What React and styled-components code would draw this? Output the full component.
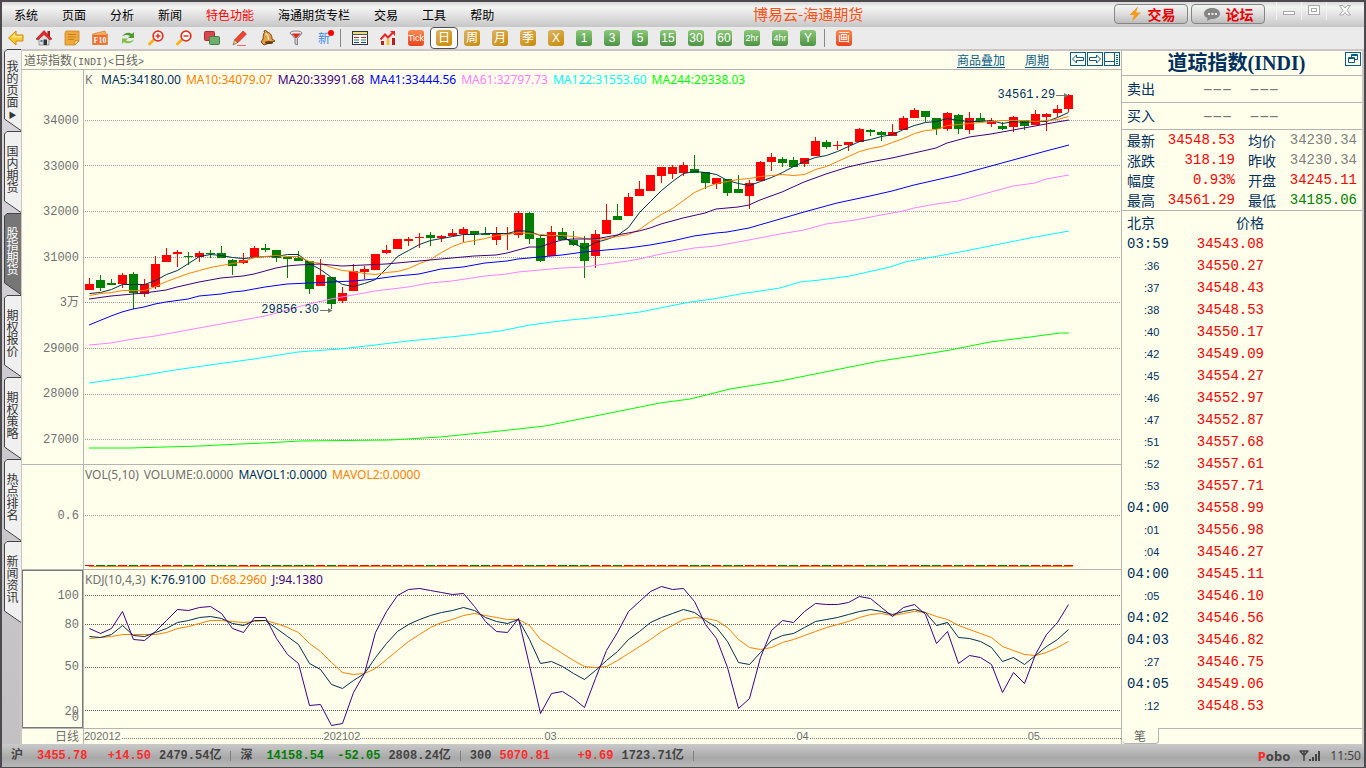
import { Fragment } from 'react';
import styled, { createGlobalStyle } from 'styled-components';

const MENUS = ['系统', '页面', '分析', '新闻', '特色功能', '海通期货专栏', '交易', '工具', '帮助'];

const PERIODS = [
  { label: 'Tick', tone: 'orange', tiny: true },
  { label: '日', tone: 'gold', active: true },
  { label: '周', tone: 'gold' },
  { label: '月', tone: 'gold' },
  { label: '季', tone: 'gold' },
  { label: 'X', tone: 'gold' },
  { label: '1', tone: 'green' },
  { label: '3', tone: 'green' },
  { label: '5', tone: 'green' },
  { label: '15', tone: 'green' },
  { label: '30', tone: 'green' },
  { label: '60', tone: 'green' },
  { label: '2hr', tone: 'green', tiny: true },
  { label: '4hr', tone: 'green', tiny: true },
  { label: 'Y', tone: 'green' },
];

const TABS = ['我的页面', '国内期货', '股指期货', '期权报价', '期权策略', '热点排名', '新闻资讯'];

const STATS = [
  ['最新', '34548.53', 'up', '均价', '34230.34', 'flat'],
  ['涨跌', '318.19', 'up', '昨收', '34230.34', 'flat'],
  ['幅度', '0.93%', 'up', '开盘', '34245.11', 'up'],
  ['最高', '34561.29', 'up', '最低', '34185.06', 'down'],
];

const TICKS = [
  ['03:59', '34543.08'],
  [':36', '34550.27'],
  [':37', '34548.43'],
  [':38', '34548.53'],
  [':40', '34550.17'],
  [':42', '34549.09'],
  [':45', '34554.27'],
  [':46', '34552.97'],
  [':47', '34552.87'],
  [':51', '34557.68'],
  [':52', '34557.61'],
  [':53', '34557.71'],
  ['04:00', '34558.99'],
  [':01', '34556.98'],
  [':04', '34546.27'],
  ['04:00', '34545.11'],
  [':05', '34546.10'],
  ['04:02', '34546.56'],
  ['04:03', '34546.82'],
  [':27', '34546.75'],
  ['04:05', '34549.06'],
  [':12', '34548.53'],
];

const QUOTES = [
  { name: '沪', last: '3455.78', change: '+14.50', amount: '2479.54亿', trend: 'up' },
  { name: '深', last: '14158.54', change: '-52.05', amount: '2808.24亿', trend: 'down' },
  { name: '300', last: '5070.81', change: '+9.69', amount: '1723.71亿', trend: 'up' },
];

const PRICE_LABELS = ['34000', '33000', '32000', '31000', '3万', '29000', '28000', '27000'];
const PRICE_LINES = [120, 165, 211, 257, 302, 348, 394, 439];
const KDJ_LINES = [595, 624, 667, 710];

const MA_LEGEND = [
  ['MA5:34180.00', '#003060'],
  ['MA10:34079.07', '#ff8000'],
  ['MA20:33991.68', '#400080'],
  ['MA41:33444.56', '#0000ff'],
  ['MA61:32797.73', '#ff80ff'],
  ['MA122:31553.60', '#00ffff'],
  ['MA244:29338.03', '#00ff00'],
];

// one candle per day: [up?, high, body top, body bottom, low]
const CANDLES = [
  [1, 278, 284, 290, 290], [0, 275, 280, 288, 291], [0, 279, 283, 285, 285], [1, 273, 275, 284, 288],
  [0, 272, 274, 293, 309], [1, 279, 284, 294, 297], [1, 256, 264, 287, 289], [1, 248, 255, 262, 262],
  [1, 250, 252, 254, 267], [0, 252, 256, 257, 265], [1, 251, 253, 257, 262], [0, 250, 253, 254, 258],
  [0, 246, 253, 258, 258], [0, 259, 260, 266, 275], [1, 253, 260, 263, 264], [1, 246, 248, 257, 257],
  [0, 244, 248, 250, 252], [0, 250, 250, 258, 262], [0, 257, 257, 259, 278], [0, 251, 258, 261, 261],
  [0, 261, 261, 289, 294], [1, 259, 275, 286, 286], [0, 277, 277, 304, 309], [1, 287, 293, 301, 303],
  [1, 264, 271, 291, 291], [1, 266, 269, 272, 279], [1, 254, 254, 270, 270], [1, 245, 250, 253, 254],
  [1, 239, 239, 249, 249], [1, 237, 239, 241, 246], [1, 233, 237, 238, 248], [0, 232, 235, 238, 246],
  [1, 235, 236, 238, 242], [1, 229, 233, 236, 236], [1, 227, 229, 234, 242], [0, 231, 231, 234, 245],
  [0, 227, 234, 235, 235], [1, 227, 233, 240, 245], [1, 227, 233, 234, 250], [1, 211, 213, 235, 238],
  [0, 212, 213, 239, 244], [0, 236, 238, 261, 262], [1, 226, 232, 256, 256], [0, 228, 232, 240, 240],
  [0, 231, 240, 245, 246], [0, 236, 243, 261, 278], [1, 230, 234, 256, 268], [1, 204, 220, 234, 234],
  [0, 204, 216, 220, 220], [1, 193, 197, 216, 216], [1, 181, 189, 196, 196], [1, 175, 175, 191, 191],
  [1, 167, 167, 176, 183], [1, 165, 167, 174, 179], [1, 162, 165, 173, 176], [0, 155, 169, 173, 173],
  [0, 172, 172, 183, 189], [1, 178, 178, 184, 189], [0, 179, 179, 193, 196], [0, 175, 189, 193, 193],
  [1, 180, 183, 196, 209], [1, 161, 162, 181, 181], [1, 153, 157, 162, 171], [0, 157, 159, 163, 167],
  [0, 157, 160, 167, 167], [1, 158, 158, 164, 167], [1, 137, 141, 156, 156], [0, 140, 142, 147, 149],
  [1, 141, 145, 146, 150], [1, 142, 142, 145, 151], [1, 128, 129, 142, 142], [0, 129, 130, 132, 136],
  [0, 131, 132, 135, 141], [1, 124, 132, 136, 136], [1, 116, 118, 130, 130], [1, 108, 110, 118, 118],
  [0, 111, 111, 117, 122], [0, 118, 118, 129, 135], [1, 112, 113, 129, 131], [0, 114, 115, 129, 134],
  [1, 112, 118, 130, 134], [0, 113, 118, 121, 121], [1, 118, 121, 124, 127], [0, 122, 126, 129, 130],
  [1, 116, 117, 127, 132], [0, 120, 120, 126, 130], [1, 110, 114, 125, 125], [1, 113, 114, 117, 131],
  [1, 105, 109, 113, 117], [1, 94, 95, 109, 112],
];

// daily series, one y value per candle
const MA5 = [
  293, 292, 289, 284, 284, 284, 280, 274, 270, 263, 256, 254, 255, 257, 258, 257, 256, 256, 254, 254,
  263, 269, 277, 284, 286, 283, 279, 268, 256, 250, 244, 240, 238, 236, 234, 234, 233, 233, 233, 230,
  231, 235, 235, 236, 243, 248, 242, 239, 235, 227, 212, 201, 190, 181, 173, 171, 172, 174, 180, 183,
  185, 181, 177, 172, 166, 161, 157, 155, 151, 146, 141, 139, 136, 134, 129, 125, 122, 121, 118, 120,
  121, 121, 120, 123, 121, 122, 121, 121, 117, 112,
];
const MA10 = [
  295, 293, 292, 290, 290, 290, 286, 281, 277, 273, 270, 267, 265, 263, 261, 257, 256, 255, 256, 256,
  261, 263, 267, 270, 271, 273, 274, 272, 271, 268, 263, 259, 252, 246, 242, 240, 238, 235, 234, 232,
  233, 234, 235, 235, 236, 238, 239, 238, 236, 234, 229, 221, 214, 208, 200, 192, 187, 183, 181, 179,
  178, 176, 175, 174, 175, 174, 169, 166, 161, 156, 151, 148, 146, 142, 138, 133, 130, 129, 125, 124,
  123, 122, 121, 120, 120, 120, 121, 120, 119, 116,
];
const KLINE = [
  636, 637, 634, 625, 635, 636, 632, 628, 622, 620, 617, 616, 618, 623, 625, 620, 620, 628, 636, 644,
  663, 669, 684, 688, 680, 673, 657, 643, 631, 624, 619, 615, 612, 610, 607, 610, 617, 621, 623, 619,
  639, 663, 661, 666, 673, 679, 670, 660, 651, 639, 631, 622, 617, 613, 609, 612, 620, 627, 641, 662,
  664, 652, 640, 635, 633, 627, 621, 619, 617, 614, 611, 609, 611, 614, 611, 609, 612, 625, 622, 637,
  638, 641, 647, 661, 657, 664, 655, 646, 639, 629,
];
const DLINE = [
  638, 637, 636, 634, 634, 634, 634, 632, 628, 626, 623, 620, 620, 621, 622, 621, 620, 623, 627, 632,
  643, 651, 662, 672, 674, 673, 668, 659, 650, 641, 634, 627, 622, 619, 615, 613, 615, 617, 619, 619,
  625, 639, 646, 653, 660, 666, 667, 666, 660, 653, 646, 639, 631, 625, 619, 617, 618, 620, 627, 639,
  647, 649, 647, 642, 639, 635, 631, 627, 624, 621, 617, 614, 613, 615, 613, 611, 612, 616, 619, 625,
  629, 633, 637, 646, 650, 654, 655, 652, 647, 641,
];
const JLINE = [
  628, 633, 628, 611, 639, 640, 631, 620, 609, 610, 607, 606, 613, 628, 632, 617, 617, 638, 654, 663,
  705, 704, 725, 723, 692, 673, 632, 611, 595, 589, 588, 590, 592, 594, 593, 606, 621, 631, 632, 618,
  665, 713, 693, 691, 698, 707, 678, 650, 632, 611, 601, 591, 586, 589, 588, 601, 624, 638, 667, 708,
  698, 657, 630, 620, 622, 611, 603, 604, 604, 602, 596, 598, 607, 616, 607, 604, 614, 643, 631, 663,
  655, 657, 664, 692, 672, 683, 654, 634, 622, 604,
];

// slower averages, drawn through fewer points
const MA20 =
  '89,299 111,296 133,294 144,293 166,290 177,287 199,282 221,278 243,276 254,274 265,271 276,268 287,266 298,265 320,264 342,266 364,265 386,264 408,262 430,260 452,258 474,256 496,255 507,253 518,250 529,247 540,247 551,243 562,240 573,239 595,239 606,237 617,235 628,233 639,231 650,228 661,224 683,218 705,213 716,209 727,208 738,207 749,205 760,200 782,192 793,187 804,182 826,174 848,167 870,162 892,158 914,153 936,148 947,143 969,137 991,134 1013,130 1035,126 1057,122 1069,120';
const MA41 =
  '89,325 111,316 122,312 133,309 144,307 155,304 166,302 188,299 199,296 221,294 232,292 243,291 265,287 287,284 309,283 331,282 353,281 375,279 397,276 408,275 419,274 441,269 463,267 485,263 507,261 518,259 540,257 562,255 584,252 606,250 628,248 650,245 672,241 694,236 716,233 727,232 749,228 780,219 804,212 837,203 870,196 892,191 914,185 936,180 958,175 980,169 1002,163 1024,157 1046,151 1069,145';
const MA61 =
  '89,345 111,343 133,339 155,336 177,332 199,328 221,324 243,320 265,316 287,310 309,304 331,299 353,295 375,291 408,287 430,283 452,281 485,276 507,274 518,272 540,270 562,268 584,267 606,264 628,261 639,259 661,254 694,248 716,246 749,240 780,234 804,230 826,224 855,220 881,215 903,211 914,208 936,204 958,201 980,195 1002,189 1013,186 1035,183 1046,179 1069,175';
const MA122 =
  '89,383 110,380 133,377 175,370 217,364 254,359 298,352 340,349 375,345 408,341 460,336 500,331 530,325 560,321 600,317 640,312 665,307 690,302 713,299 740,294 780,288 800,282 820,280 850,276 890,267 905,262 960,252 1000,244 1030,238 1069,231';
const MA244 =
  '89,448 130,448 165,447 200,446 240,444 265,443 300,441 390,440 440,437 500,431 545,426 590,417 625,410 660,403 690,399 730,389 780,381 830,371 880,361 920,355 950,350 990,342 1030,337 1060,333 1069,333';

const toPoints = (series) => series.map((y, i) => `${89.5 + i * 11},${y + 0.5}`).join(' ');

/* ---------- icons ---------- */

const BackIcon = () => (
  <Icon viewBox="0 0 16 16">
    <path d="M8 1v4h7v6H8v4L0.500 8z" fill="#fbc82c" stroke="#d08a10" />
    <path d="M7 3.500L3 7.500h11V6H7z" fill="#fdea90" />
  </Icon>
);

const HomeIcon = () => (
  <Icon viewBox="0 0 16 16">
    <path d="M3 8l5-5 5 5v7H3z" fill="#dedede" stroke="#888" strokeWidth="0.800" />
    <path d="M11.500 1h2.500v6h-2.500z" fill="#a8201c" />
    <path d="M0 9L8 0.500 16 9l-2 1L8 4.500 2 10z" fill="#e02a2a" stroke="#a01818" strokeWidth="0.600" />
    <path d="M7.500 9.500h3.500V15H7.500z" fill="#333" />
    <path d="M4.500 10h2v2h-2z" fill="#4878a8" />
  </Icon>
);

const NoteIcon = () => (
  <Icon viewBox="0 0 16 16">
    <path d="M2 1h13v10l-4 4H1V3z" fill="#eda93a" stroke="#c88424" strokeWidth="0.800" />
    <path d="M15 11l-4 4v-4z" fill="#ffe2a0" stroke="#b87414" strokeWidth="0.600" />
    <path d="M4 4.500h8M4 7h8M4 9.500h6" stroke="#c88020" />
  </Icon>
);

const F10Icon = () => (
  <Icon viewBox="0 0 16 16">
    <path d="M0.500 4L13 1l1 3h1.500v10.500h-15z" fill="#f4b060" stroke="#d87828" strokeWidth="0.700" />
    <rect x="1" y="5" width="14" height="9.500" fill="#f26a2c" />
    <text x="8" y="13" textAnchor="middle" fontSize="8" fontWeight="bold" fill="#fff" fontFamily="Liberation Serif, serif">
      F10
    </text>
  </Icon>
);

const RefreshIcon = () => (
  <Icon viewBox="0 0 16 16">
    <path d="M2 6.500C4 2.500 9 1.500 12 4l2-2v6H8l2-2C8 4.500 5 4.500 2 6.500z" fill="#4f9c2c" />
    <path d="M14 9.500c-2 4-7 5-10 2.500l-2 2V8.500h6l-2 2c2 1.500 5 1 8-1z" fill="#7cc243" />
  </Icon>
);

const ZoomIcon = ({ plus }) => (
  <Icon viewBox="0 0 16 16">
    <path d="M6 9.500L1.500 14" stroke="#f3b61c" strokeWidth="3" strokeLinecap="round" />
    <circle cx="10" cy="6" r="4.800" fill="#fff" stroke="#dd3526" strokeWidth="1.800" />
    <path d={plus ? 'M7.500 6h5M10 3.500v5' : 'M7.500 6h5'} stroke="#dd3526" strokeWidth="1.500" />
  </Icon>
);

const OverlayIcon = () => (
  <Icon viewBox="0 0 16 16">
    <rect x="0.500" y="1.500" width="10" height="9" rx="1" fill="#d8484a" stroke="#b02c30" />
    <rect x="5.500" y="6.500" width="10" height="8" rx="1" fill="#6fae6c" stroke="#3f7f40" />
  </Icon>
);

const PencilIcon = () => (
  <Icon viewBox="0 0 16 16">
    <path d="M11 1l3.500 3L6 12.500 2.500 10z" fill="#ee4430" stroke="#b32a1c" strokeWidth="0.600" />
    <path d="M2.500 10L6 12.500 1 15z" fill="#f4c48c" stroke="#7a4a20" strokeWidth="0.600" />
    <path d="M5 15.500h9" stroke="#e87060" />
  </Icon>
);

const BellIcon = () => (
  <Icon viewBox="0 0 16 16">
    <path d="M4 1c1-1 3-.5 3 1 4 1 5 4 5 7l3 2-11 4L1 12l2-3c.5-3 0-5 1.500-6.500z" fill="#e0a048" stroke="#80460c" />
    <path d="M5.500 4c2 0 3 3 3 6" stroke="#ffe4b0" fill="none" strokeWidth="1.500" />
    <ellipse cx="9" cy="12.500" rx="4" ry="1.500" fill="#6b3a10" />
  </Icon>
);

const FilterIcon = () => (
  <Icon viewBox="0 0 16 16">
    <path d="M2 3l5 5.500V14l2.500 1V8.500L14 3z" fill="#cfcfd4" stroke="#6d6d74" strokeWidth="0.800" />
    <ellipse cx="8" cy="3" rx="6" ry="2" fill="#eee" stroke="#6d6d74" strokeWidth="0.800" />
    <path d="M4 3.500h8.500L8.500 8h-1z" fill="#e02828" />
  </Icon>
);

const TableIcon = () => (
  <Icon viewBox="0 0 16 16">
    <rect x="0.500" y="1.500" width="15" height="13" fill="#fff" stroke="#333" />
    <rect x="1" y="2" width="14" height="2" fill="#e8dc78" />
    <path d="M0 4.500h16" stroke="#555" />
    <path d="M2 7.500h5M9 7.500h5" stroke="#e02020" />
    <path d="M2 10h5M9 10h5" stroke="#188038" />
    <path d="M2 12.500h5M9 12.500h5" stroke="#2040c0" />
  </Icon>
);

const TrendIcon = () => (
  <Icon viewBox="0 0 16 16">
    <path d="M1 11h3v4H1z" fill="#b52020" />
    <path d="M6.500 9h3v6h-3z" fill="#f0c040" />
    <path d="M12 8h3v7h-3z" fill="#b52020" />
    <path d="M0.500 9.500L5 4.500l3 3 5-5" fill="none" stroke="#e82828" strokeWidth="2" />
    <path d="M10 1h5v5z" fill="#e82828" />
  </Icon>
);

const BoltIcon = () => (
  <Icon viewBox="0 0 16 16">
    <path d="M11 0.500L2.500 9h4.500L5 15.500l9-9H9z" fill="#f49a1c" />
  </Icon>
);

const ChatIcon = () => (
  <Icon viewBox="0 0 18 16" $wide>
    <path d="M9 2c5 0 8 2.500 8 5.500S14 13 9 13l-1 0-4 2 .500-3C2 11 1 9.500 1 7.500 1 4.500 4 2 9 2z" fill="#858585" />
    <path d="M5 7h2v2H5zM8.500 7h2v2h-2zM12 7h2v2h-2z" fill="#eee" />
  </Icon>
);

const SignalIcon = () => (
  <svg width="22" height="12" viewBox="0 0 22 12" aria-hidden="true">
    <path d="M0.500 1h9M1 1l4 4.500L9 1M5 1v10" fill="none" stroke="#444" strokeWidth="1.500" />
    <path d="M10 9h2v2h-2zM13 7h2v4h-2zM16 4h2v7h-2zM19 1h2v10h-2z" fill="#444" />
  </svg>
);

const WindowGlyph = ({ kind }) => (
  <svg width="12" height="12" viewBox="0 0 12 12" fill="#fff" stroke="#a8a8a8" aria-hidden="true">
    {kind === 'min' && <rect x="0.500" y="6.500" width="11" height="3" />}
    {kind === 'max' && (
      <>
        <rect x="0.500" y="0.500" width="11" height="9" />
        <rect x="3.500" y="3.500" width="5" height="3" />
      </>
    )}
    {kind === 'close' && <path d="M0.500 0.500h3.500l2 2.500 2-2.500h3.500L8 5.500l3.500 4.500H8L6 7.500 4 10H0.500L4 5.500z" />}
  </svg>
);

const PanelGlyph = ({ kind }) => (
  <svg width="16" height="15" viewBox="0 0 16 15" fill="none" stroke="#0a5c8c" aria-hidden="true">
    <rect x="0.500" y="0.500" width="15" height="13" />
    {kind === 'left' && <path d="M2.500 7L6.500 3v2.500h7v3h-7V11z" />}
    {kind === 'right' && <path d="M13.500 7L9.500 3v2.500h-7v3h7V11z" />}
    {kind === 'side' && <path d="M10.500 0.500v13M0 9.500h10M12 3.500h2M12 5.500h2M12 7.500h2M12 9.500h2M12 11.500h2" />}
    {kind === 'detach' && <path d="M6.500 5.500v-3h6v5h-3M3.500 5.500h6v5h-6zM3.500 6.500h6M6.500 3.500h6" />}
  </svg>
);

const TOOLS = [
  ['后退', <BackIcon />],
  ['首页', <HomeIcon />],
  ['公告', <NoteIcon />],
  ['F10', <F10Icon />],
  ['刷新', <RefreshIcon />],
  ['放大', <ZoomIcon plus />],
  ['缩小', <ZoomIcon />],
  ['叠加', <OverlayIcon />],
  ['画线', <PencilIcon />],
  ['预警', <BellIcon />],
  ['筛选', <FilterIcon />],
];

/* ---------- charts ---------- */

const Line = ({ points, color }) => (
  <polyline points={points} fill="none" stroke={color} strokeWidth="1" vectorEffect="non-scaling-stroke" />
);

const GridLine = ({ y, color }) => (
  <line x1="85" x2="1121" y1={y + 0.5} y2={y + 0.5} stroke={color} strokeDasharray="1 1" />
);

const PricePlot = () => (
  <Plot viewBox="84 88 1037 376" preserveAspectRatio="none">
    {PRICE_LINES.map((y) => (
      <GridLine key={y} y={y} color="#a0a0a0" />
    ))}
    <g shapeRendering="crispEdges">
      {CANDLES.map(([up, high, top, bottom, low], i) => (
        <g key={i} fill={up ? '#ff0000' : '#008000'}>
          <rect x={89 + i * 11} y={high} width="1" height={low - high} />
          <rect x={85 + i * 11} y={top} width="9" height={bottom - top} />
        </g>
      ))}
    </g>
    <Line points={toPoints(MA5)} color="#003050" />
    <Line points={toPoints(MA10)} color="#ff8000" />
    <Line points={MA20} color="#400080" />
    <Line points={MA41} color="#0000ff" />
    <Line points={MA61} color="#ff80ff" />
    <Line points={MA122} color="#00ffff" />
    <Line points={MA244} color="#00ff00" />
  </Plot>
);

const VolumePlot = () => (
  <Plot viewBox="84 483 1037 86" preserveAspectRatio="none">
    <GridLine y={515} color="#a0a0a0" />
    <g shapeRendering="crispEdges">
      {CANDLES.map(([up], i) => (
        <rect key={i} x={85 + i * 11} y="565" width="9" height="1" fill={up ? '#ff0000' : '#008000'} />
      ))}
      <rect x="89" y="566" width="984" height="1" fill="#ff8000" />
    </g>
  </Plot>
);

const KdjPlot = () => (
  <Plot viewBox="84 588 1037 140" preserveAspectRatio="none">
    {KDJ_LINES.map((y) => (
      <GridLine key={y} y={y} color="#606060" />
    ))}
    <Line points={toPoints(DLINE)} color="#ff8000" />
    <Line points={toPoints(KLINE)} color="#003050" />
    <Line points={toPoints(JLINE)} color="#400080" />
  </Plot>
);

const Callout = ({ value, right, top }) => (
  <Mark $right={right} $top={top}>
    {value}
    <svg width="13" height="9" viewBox="0 0 13 9" aria-hidden="true">
      <path d="M0 4.500h12" stroke="#777" />
      <path d="M8 2l4.500 2.500L8 7z" fill="#777" />
    </svg>
  </Mark>
);

const App = () => {
  return (
    <>
      <GlobalStyle />
      <Shell>
        <TitleBar>
          <Menu>
            {MENUS.map((name) => (
              <MenuItem key={name} $hot={name === '特色功能'}>
                {name}
              </MenuItem>
            ))}
          </Menu>
          <AppTitle>博易云-海通期货</AppTitle>
          <TitleActions>
            <PillButton>
              <BoltIcon />
              交易
            </PillButton>
            <PillButton>
              <ChatIcon />
              论坛
            </PillButton>
            <WindowButtons>
              {['min', 'max', 'close'].map((kind) => (
                <WindowButton key={kind} aria-label={kind}>
                  <WindowGlyph kind={kind} />
                </WindowButton>
              ))}
            </WindowButtons>
          </TitleActions>
        </TitleBar>

        <Toolbar>
          {TOOLS.map(([label, icon]) => (
            <ToolButton key={label} aria-label={label}>
              {icon}
            </ToolButton>
          ))}
          <ToolButton>
            <NewBadge>新</NewBadge>
          </ToolButton>
          <Divider />
          <ToolButton aria-label="报价">
            <TableIcon />
          </ToolButton>
          <ToolButton aria-label="走势">
            <TrendIcon />
          </ToolButton>
          {PERIODS.map(({ label, tone, tiny, active }) => (
            <ToolButton key={label} $active={active}>
              <Tile $tone={tone} $tiny={tiny}>
                {label}
              </Tile>
            </ToolButton>
          ))}
          <Divider />
          <ToolButton>
            <Tile $tone="orange">画</Tile>
          </ToolButton>
        </Toolbar>

        <Body>
          <SideTabs>
            {TABS.map((name, i) => (
              <SideTab key={name} $active={i === 2} $first={i === 0}>
                <svg width="17" height="82" viewBox="0 0 17 82" aria-hidden="true">
                  <path
                    d="M17 0.500H3L0.500 3V70L17 81.500"
                    fill={i === 2 ? '#767676' : '#f0f0f0'}
                    stroke="#444"
                  />
                </svg>
                <span>
                  {name}
                  {i === 0 && <More>▶</More>}
                </span>
              </SideTab>
            ))}
          </SideTabs>

          <Main>
            <Charts>
              <ChartHeader>
                <ChartName>
                  道琼指数<small>(INDI)&lt;</small>日线<small>&gt;</small>
                </ChartName>
                <ChartLinks>
                  <a href="#overlay">商品叠加</a>
                  <a href="#period">周期</a>
                </ChartLinks>
                <GlyphGroup>
                  {['left', 'right', 'side'].map((kind) => (
                    <GlyphButton key={kind} aria-label={kind}>
                      <PanelGlyph kind={kind} />
                    </GlyphButton>
                  ))}
                </GlyphGroup>
              </ChartHeader>

              <Pane $grow={394}>
                <Axis>
                  <PriceScale>
                    {PRICE_LABELS.map((label) => (
                      <span key={label}>{label}</span>
                    ))}
                  </PriceScale>
                </Axis>
                <PlotArea>
                  <Legend>
                    <LegendName>K</LegendName>
                    {MA_LEGEND.map(([label, color]) => (
                      <LegendItem key={label} $color={color}>
                        {label}
                      </LegendItem>
                    ))}
                  </Legend>
                  <PlotBox>
                    <PricePlot />
                    <Callout value="29856.30" right="76%" top="58.800%" />
                    <Callout value="34561.29" right="5%" top="1.600%" />
                  </PlotBox>
                </PlotArea>
              </Pane>

              <Pane $grow={104}>
                <Axis>
                  <VolumeScale>0.6</VolumeScale>
                </Axis>
                <PlotArea>
                  <Legend>
                    <LegendItem $color="#707070">VOL(5,10)</LegendItem>
                    <LegendItem $color="#707070">VOLUME:0.0000</LegendItem>
                    <LegendItem $color="#003060">MAVOL1:0.0000</LegendItem>
                    <LegendItem $color="#ff8000">MAVOL2:0.0000</LegendItem>
                  </Legend>
                  <PlotBox>
                    <VolumePlot />
                  </PlotBox>
                </PlotArea>
              </Pane>

              <Pane $grow={158}>
                <Axis $boxed>
                  <KdjLabel $top="16%">100</KdjLabel>
                  <KdjLabel $top="34%">80</KdjLabel>
                  <KdjLabel $top="61%">50</KdjLabel>
                  <KdjLabel $top="89%">20</KdjLabel>
                  <KdjLabel $top="93%">0</KdjLabel>
                </Axis>
                <PlotArea>
                  <Legend>
                    <LegendItem $color="#707070">KDJ(10,4,3)</LegendItem>
                    <LegendItem $color="#003060">K:76.9100</LegendItem>
                    <LegendItem $color="#ff8000">D:68.2960</LegendItem>
                    <LegendItem $color="#400080">J:94.1380</LegendItem>
                  </Legend>
                  <PlotBox>
                    <KdjPlot />
                  </PlotBox>
                </PlotArea>
              </Pane>

              <DateRow>
                <DateUnit>日线</DateUnit>
                <DateScale>
                  <DateMark $left="0%">202012</DateMark>
                  <DateMark $left="23.100%">202102</DateMark>
                  <DateMark $left="44.400%">03</DateMark>
                  <DateMark $left="68.700%">04</DateMark>
                  <DateMark $left="91%">05</DateMark>
                </DateScale>
              </DateRow>
            </Charts>

            <QuotePanel>
              <QuoteTitle>
                <h1>道琼指数(INDI)</h1>
                <GlyphButton aria-label="detach">
                  <PanelGlyph kind="detach" />
                </GlyphButton>
              </QuoteTitle>
              {['卖出', '买入'].map((side) => (
                <OrderRow key={side}>
                  <span>{side}</span>
                  <Blank>−−−</Blank>
                  <Blank>−−−</Blank>
                </OrderRow>
              ))}
              <StatTable>
                <tbody>
                  {STATS.map(([a, av, at, b, bv, bt]) => (
                    <tr key={a}>
                      <th>{a}</th>
                      <Num $trend={at}>{av}</Num>
                      <th>{b}</th>
                      <Num $trend={bt}>{bv}</Num>
                    </tr>
                  ))}
                </tbody>
              </StatTable>
              <TickTable>
                <thead>
                  <tr>
                    <th>北京</th>
                    <th>价格</th>
                  </tr>
                </thead>
                <tbody>
                  {TICKS.map(([time, price], i) => (
                    <tr key={i}>
                      <Time $short={time.startsWith(':')}>{time}</Time>
                      <Num $trend="up">{price}</Num>
                    </tr>
                  ))}
                </tbody>
              </TickTable>
              <PanelFooter>
                <FooterTab>笔</FooterTab>
                <FooterRest />
              </PanelFooter>
            </QuotePanel>
          </Main>
        </Body>

        <StatusBar>
          {QUOTES.map(({ name, last, change, amount, trend }) => (
            <Fragment key={name}>
              <Quote>
                <QuoteName>{name}</QuoteName>
                <QuoteFigures $trend={trend}>
                  <span>{last}</span>
                  <span>{change}</span>
                </QuoteFigures>
                <span>{amount}</span>
              </Quote>
              <StatusDivider />
            </Fragment>
          ))}
          <StatusRight>
            <Brand>
              <em>P</em>obo
            </Brand>
            <SignalIcon />
            <Clock>11:50</Clock>
          </StatusRight>
        </StatusBar>
      </Shell>
    </>
  );
};

export default App;

const trendColor = { up: '#ff0000', down: '#008000', flat: '#808080' };

const tones = {
  orange: 'linear-gradient(#f88c50, #e8441c)',
  gold: 'linear-gradient(150deg, #dcb460, #c88a08)',
  green: 'linear-gradient(#8cc878, #4c9444)',
};

const GlobalStyle = createGlobalStyle`
  * {
    box-sizing: border-box;
  }

  body {
    margin: 0;
    font-family: 'Noto Sans CJK SC', sans-serif;
    font-size: 12px;
    color: #000;
  }

  button {
    margin: 0;
    padding: 0;
    border: 0;
    background: none;
    font: inherit;
    color: inherit;
    cursor: pointer;
  }

  table {
    border-collapse: collapse;
    table-layout: fixed;
  }

  th, td {
    padding: 0;
    font-weight: normal;
    text-align: left;
  }
`;

const Shell = styled.div`
  display: flex;
  flex-direction: column;
  height: 100vh;
  min-height: 640px;
  border: 2px solid #4c4a4c;
  border-bottom-width: 1px;
  background: #ebebeb;
`;

const TitleBar = styled.header`
  display: flex;
  height: 25px;
  flex-shrink: 0;
  background: linear-gradient(#d8d8d8, #f4f4f4 20%, #e4e4e4 50%, #c6c6c6);
`;

const Menu = styled.nav`
  display: flex;
  flex: 3 1 0;
`;

const MenuItem = styled.button`
  padding: 0 12px;
  white-space: nowrap;
  color: ${(props) => (props.$hot ? '#ff0000' : '#000')};
`;

const AppTitle = styled.div`
  font-size: 15px;
  line-height: 24px;
  white-space: nowrap;
  color: #ff5010;
`;

const TitleActions = styled.div`
  display: flex;
  flex: 2 1 0;
  justify-content: flex-end;
  align-items: flex-start;
  gap: 3px;
`;

const PillButton = styled.button`
  display: flex;
  align-items: center;
  justify-content: center;
  gap: 5px;
  width: 74px;
  height: 20px;
  margin-top: 2px;
  border: 1px solid #858585;
  border-radius: 4px;
  background: linear-gradient(#f4f4f4, #dedede 50%, #bdbdbd);
  font-size: 14px;
  font-weight: bold;
  line-height: 18px;
  color: #e80000;
`;

const WindowButtons = styled.div`
  display: flex;
  padding: 0 2px 0 8px;
`;

const WindowButton = styled.button`
  display: flex;
  width: 25px;
  height: 18px;
  align-items: center;
  justify-content: center;
  border-left: 1px solid #f2f2f2;

  &:last-child {
    width: 36px;
  }
`;

const Toolbar = styled.div`
  display: flex;
  height: 22px;
  flex-shrink: 0;
`;

const ToolButton = styled.button`
  display: flex;
  align-items: center;
  justify-content: center;
  width: 28px;
  height: 22px;
  border: 1px solid ${(props) => (props.$active ? '#505050' : 'transparent')};
  border-radius: 4px;
  background: ${(props) => (props.$active ? '#fff' : 'none')};
`;

const Icon = styled.svg.attrs({ 'aria-hidden': true })`
  width: ${(props) => (props.$wide ? 18 : 16)}px;
  height: 16px;
  flex-shrink: 0;
`;

const Tile = styled.span`
  display: flex;
  align-items: center;
  justify-content: center;
  width: 16px;
  height: 16px;
  border-radius: 3px;
  background: ${(props) => tones[props.$tone]};
  font-family: 'Liberation Sans', 'Noto Sans CJK SC', sans-serif;
  font-size: ${(props) => (props.$tiny ? 9 : 12)}px;
  line-height: 16px;
  color: #fff;
`;

const NewBadge = styled.span`
  position: relative;
  line-height: 16px;
  color: #3c8ce8;

  &::after {
    content: '';
    position: absolute;
    top: 0;
    right: -4px;
    width: 6px;
    height: 6px;
    border-radius: 50%;
    background: #ff0000;
  }
`;

const Divider = styled.span`
  width: 1px;
  margin: 2px 5px 2px 2px;
  background: #888;
`;

const Body = styled.div`
  display: flex;
  flex: 1;
  min-height: 0;
`;

const SideTabs = styled.nav`
  width: 18px;
  flex-shrink: 0;
  padding-left: 2px;
  background: linear-gradient(#d8d6dc, #c2c0c2);
`;

const SideTab = styled.button`
  position: relative;
  display: block;
  width: 16px;
  height: 82px;
  padding-top: ${(props) => (props.$first ? 8 : 14)}px;
  text-align: left;
  color: ${(props) => (props.$active ? '#fff' : '#333')};

  svg {
    position: absolute;
    top: 0;
    left: 0;
  }

  span {
    position: relative;
    display: block;
    height: 68px;
    writing-mode: vertical-rl;
    line-height: 17px;
  }
`;

const More = styled.i`
  padding-top: 3px;
  font-size: 8px;
  font-style: normal;
`;

const Main = styled.main`
  display: flex;
  flex: 1;
  min-width: 0;
  border: 2px solid #cdc5c5;
  border-bottom: 0;
  background: #ffffec;
`;

const Charts = styled.section`
  display: flex;
  flex: 1;
  flex-direction: column;
  min-width: 0;
`;

const ChartHeader = styled.div`
  display: flex;
  height: 19px;
  padding-left: 2px;
  border-bottom: 1px solid #b4b4b4;
  line-height: 18px;
`;

const ChartName = styled.div`
  flex: 1;
  color: #666;

  small {
    font-family: 'Liberation Mono', monospace;
    font-size: 10px;
  }
`;

const ChartLinks = styled.div`
  display: flex;
  gap: 20px;
  margin-right: 21px;

  a {
    color: #0a5c8c;
    text-underline-offset: 2px;
  }
`;

const GlyphGroup = styled.div`
  display: flex;
  gap: 1px;
  margin: 1px 1px 0 0;
`;

const GlyphButton = styled.button`
  display: flex;
  width: 16px;
  height: 15px;
`;

const Pane = styled.div`
  display: flex;
  flex: ${(props) => props.$grow} 1 0;
  min-height: 0;
  border-bottom: 1px solid #b4b4b4;
`;

const Axis = styled.div`
  position: relative;
  width: 62px;
  flex-shrink: 0;
  border-right: 1px solid #b4b4b4;
  box-shadow: ${(props) => (props.$boxed ? 'inset 0 0 0 1px #7a7a7a' : 'none')};
  font-family: 'Liberation Mono', 'Noto Sans CJK SC', monospace;
  line-height: 16px;
  text-align: right;
  color: #707070;
`;

const PriceScale = styled.div`
  display: flex;
  flex-direction: column;
  justify-content: space-between;
  height: 100%;
  padding: 43px 4px 16px 0;

  span {
    height: 16px;
  }
`;

const VolumeScale = styled.div`
  padding: 43px 4px 0 0;
`;

const KdjLabel = styled.span`
  position: absolute;
  top: ${(props) => props.$top};
  right: 4px;
  margin-top: -7px;
`;

const PlotArea = styled.div`
  display: flex;
  flex: 1;
  flex-direction: column;
  min-width: 0;
`;

const Legend = styled.div`
  display: flex;
  gap: 5px;
  height: 18px;
  padding-left: 1px;
  font-family: 'Noto Sans', sans-serif;
  line-height: 20px;
  white-space: nowrap;
`;

const LegendName = styled.span`
  width: 11px;
  color: #707070;
`;

const LegendItem = styled.span`
  color: ${(props) => props.$color};
`;

const PlotBox = styled.div`
  position: relative;
  display: flex;
  flex: 1;
  min-height: 0;
`;

const Plot = styled.svg`
  width: 100%;
  height: 100%;
  overflow: visible;
`;

const Mark = styled.div`
  position: absolute;
  top: ${(props) => props.$top};
  right: ${(props) => props.$right};
  display: flex;
  align-items: center;
  gap: 1px;
  margin-top: -8px;
  font-family: 'Liberation Mono', monospace;
  line-height: 18px;
  color: #003060;
`;

const DateRow = styled.div`
  display: flex;
  height: 15px;
  line-height: 14px;
  color: #707070;
`;

const DateUnit = styled.div`
  width: 62px;
  padding-right: 4px;
  border-right: 1px solid #b4b4b4;
  text-align: right;
`;

const DateScale = styled.div`
  position: relative;
  flex: 1;
  font-family: 'Liberation Sans', sans-serif;
  font-size: 11px;
  background: repeating-linear-gradient(90deg, #808080 0 1px, transparent 1px 2px) 0 9px / 100% 1px no-repeat;
`;

const DateMark = styled.span`
  position: absolute;
  left: ${(props) => props.$left};
  background: #ffffec;
`;

const QuotePanel = styled.aside`
  display: flex;
  flex-direction: column;
  width: 241px;
  flex-shrink: 0;
  border-left: 1px solid #b4b4b4;
  overflow: hidden;
  font-size: 14px;
  color: #003060;
`;

const QuoteTitle = styled.div`
  display: flex;
  height: 25px;
  flex-shrink: 0;
  padding: 1px 1px 0 6px;
  border-bottom: 1px solid #b4b4b4;

  h1 {
    flex: 1;
    margin: 0;
    font-family: 'Liberation Serif', 'Noto Sans CJK SC', serif;
    font-size: 20px;
    line-height: 23px;
    text-align: center;
  }
`;

const OrderRow = styled.div`
  display: flex;
  height: 27px;
  flex-shrink: 0;
  gap: 18px;
  padding-left: 5px;
  border-bottom: 1px solid #b4b4b4;
  line-height: 25px;

  span:first-child {
    width: 58px;
  }
`;

const Blank = styled.span`
  font-family: 'Liberation Mono', monospace;
  font-size: 16px;
  line-height: 30px;
  color: #777;
`;

const StatTable = styled.table`
  width: 100%;
  border-bottom: 1px solid #b4b4b4;

  tr {
    height: 20px;
    line-height: 20px;
  }

  th {
    width: 33px;
    padding-left: 5px;
  }

  th:nth-child(3) {
    width: 41px;
    padding-left: 13px;
  }

  td:last-child {
    width: 86px;
    padding-right: 5px;
  }
`;

const Num = styled.td`
  font-family: 'Liberation Mono', monospace;
  font-size: 14px;
  text-align: right;
  color: ${(props) => trendColor[props.$trend]};
`;

const TickTable = styled.table`
  width: 142px;

  tr {
    height: 22px;
    line-height: 22px;
  }

  th:first-child {
    width: 60px;
    padding-left: 5px;
  }

  th:last-child {
    text-align: right;
  }
`;

const Time = styled.td`
  padding-left: ${(props) => (props.$short ? 22 : 5)}px;
  font-family: ${(props) => (props.$short ? "'Liberation Sans', sans-serif" : "'Liberation Mono', monospace")};
  font-size: ${(props) => (props.$short ? 11 : 14)}px;
`;

const PanelFooter = styled.div`
  display: flex;
  height: 16px;
  margin-top: auto;
  flex-shrink: 0;
`;

const FooterTab = styled.button`
  width: 37px;
  border: 1px solid #b4b4b4;
  border-width: 0 1px 1px 0;
  border-radius: 0 0 4px 4px;
  font-size: 12px;
  line-height: 14px;
  color: #666;
`;

const FooterRest = styled.div`
  flex: 1;
  border-top: 1px solid #b4b4b4;
`;

const StatusBar = styled.footer`
  display: flex;
  align-items: center;
  height: 23px;
  flex-shrink: 0;
  padding: 0 3px 0 9px;
  background: linear-gradient(#cacaca, #a8a8a8 60%, #b8b8b8);
  font-family: 'Liberation Mono', 'Noto Sans CJK SC', monospace;
  font-weight: bold;
  line-height: 20px;
  color: #444;
`;

const Quote = styled.div`
  display: flex;
  align-items: baseline;
  gap: 8px;
`;

const QuoteName = styled.span`
  min-width: 18px;
`;

const QuoteFigures = styled.span`
  display: flex;
  justify-content: space-between;
  width: 114px;
  color: ${(props) => (props.$trend === 'up' ? '#ff2a2a' : '#008000')};
`;

const StatusDivider = styled.span`
  width: 1px;
  height: 10px;
  margin: 0 9px;
  background: #808080;
`;

const StatusRight = styled.div`
  display: flex;
  align-items: center;
  gap: 9px;
  margin-left: auto;
`;

const Brand = styled.span`
  font-family: 'Noto Sans', sans-serif;
  font-size: 13px;

  em {
    font-style: normal;
    color: #ff2a2a;
  }
`;

const Clock = styled.time`
  font-family: 'Noto Sans', sans-serif;
  font-size: 12px;
  font-weight: normal;
`;
